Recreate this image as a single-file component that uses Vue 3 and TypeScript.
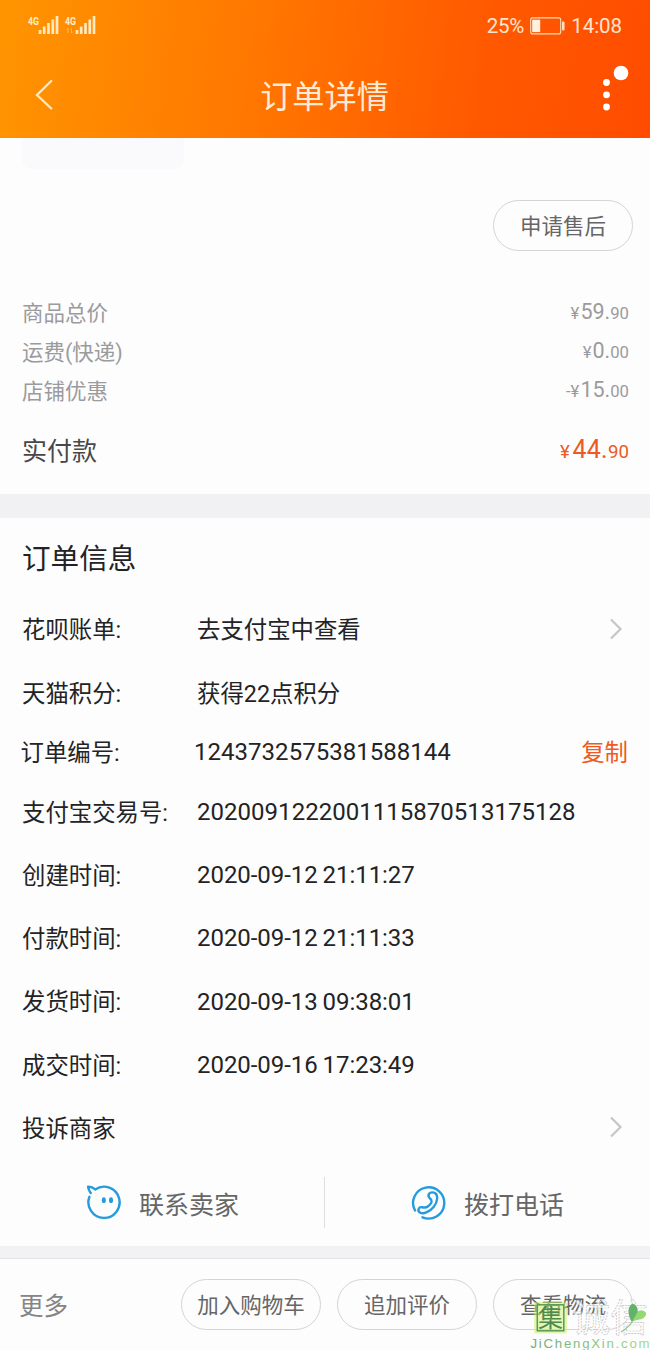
<script setup lang="ts">
interface Price { label: string; sign: string; whole: string; cents: string }
interface Info { label: string; value: string; kind?: 'link' | 'copy'; size: string; numeric?: 'digits' | 'date' }

const prices: Price[] = [
  { label: '商品总价', sign: '¥', whole: '59.', cents: '90' },
  { label: '运费(快递)', sign: '¥', whole: '0.', cents: '00' },
  { label: '店铺优惠', sign: '-¥', whole: '15.', cents: '00' },
]

const infos: Info[] = [
  { label: '花呗账单:', value: '去支付宝中查看', kind: 'link', size: 'tall' },
  { label: '天猫积分:', value: '获得22点积分', size: 'tall' },
  { label: '订单编号:', value: '1243732575381588144', kind: 'copy', size: 'short', numeric: 'digits' },
  { label: '支付宝交易号:', value: '2020091222001115870513175128', size: 'tall', numeric: 'digits' },
  { label: '创建时间:', value: '2020-09-12 21:11:27', size: 'tall', numeric: 'date' },
  { label: '付款时间:', value: '2020-09-12 21:11:33', size: 'tall', numeric: 'date' },
  { label: '发货时间:', value: '2020-09-13 09:38:01', size: 'tall', numeric: 'date' },
  { label: '成交时间:', value: '2020-09-16 17:23:49', size: 'tall', numeric: 'date' },
  { label: '投诉商家', value: '', kind: 'link', size: 'tall' },
]

const actions: string[] = ['加入购物车', '追加评价', '查看物流']
</script>

<template>
  <div class="screen">
    <header class="top">
      <div class="status">
        <div class="signals">
          <svg v-for="n in 2" :key="n" class="signal" width="37" height="22" viewBox="0 0 37 22">
            <text class="net" x="0" y="9.5" textLength="11" lengthAdjust="spacingAndGlyphs">4G</text>
            <path class="bars" d="M12 19v-4M16.2 19v-7.5M20.5 19v-11M24.8 19v-14.5M29 19v-18" />
            <path v-if="n === 2" class="data" d="M3 18v-5l-1.5 1.5M6.5 13v5l1.5-1.5" />
          </svg>
        </div>
        <div class="power">
          <span class="charge">25%</span>
          <svg class="battery" width="35" height="18" viewBox="0 0 35 18">
            <rect x="0.7" y="0.9" width="30" height="16" rx="2" fill="none" stroke="#ffdcb8" stroke-width="1.1" />
            <rect x="2.2" y="2.7" width="8" height="12.4" fill="#fff1e2" />
            <rect x="32" y="4.5" width="2.5" height="9" rx="1" fill="#ffe3c6" />
          </svg>
          <span class="clock">14:08</span>
        </div>
      </div>
      <div class="nav">
        <svg class="back" width="20" height="32" viewBox="0 0 20 32">
          <path d="M17.3 2L3 16L17.3 29.5" />
        </svg>
        <h1>订单详情</h1>
        <svg class="more-dots" width="30" height="48" viewBox="0 0 30 48">
          <circle cx="6.5" cy="17.5" r="3.4" />
          <circle cx="6.5" cy="29.8" r="3.4" />
          <circle cx="6.5" cy="42" r="3.4" />
          <circle cx="21" cy="8" r="7.3" />
        </svg>
      </div>
    </header>

    <section class="summary">
      <div class="thumb"></div>
      <div class="service"><button class="pill">申请售后</button></div>
      <div class="prices">
        <div v-for="p in prices" :key="p.label" class="price">
          <span class="price-label">{{ p.label }}</span>
          <span class="amount"><small class="sign">{{ p.sign }}</small>{{ p.whole }}<small>{{ p.cents }}</small></span>
        </div>
      </div>
      <div class="total">
        <span class="total-label">实付款</span>
        <span class="amount paid"><small class="sign">¥</small>44.<small>90</small></span>
      </div>
    </section>

    <section class="details">
      <h2>订单信息</h2>
      <div v-for="i in infos" :key="i.label" class="row" :class="[i.size, i.kind]">
        <span class="label">{{ i.label }}</span>
        <span class="value" :class="i.numeric">{{ i.value }}</span>
        <svg v-if="i.kind === 'link'" class="chevron" width="14" height="22" viewBox="0 0 14 22">
          <path d="M2 1.5L11.5 11L2 20.5" />
        </svg>
        <a v-if="i.kind === 'copy'" class="copy-link">复制</a>
      </div>
    </section>

    <section class="contact">
      <div class="contact-item">
        <svg width="36" height="36" viewBox="0 0 36 36">
          <path d="M3.4 12.8A15.6 15.6 0 1 0 9.2 5.4Q6 2.6 2.1 2.8Q2.5 6 4.7 9" />
          <ellipse class="eye" cx="17.8" cy="16.2" rx="2" ry="2.9" />
          <ellipse class="eye" cx="25" cy="16.2" rx="2" ry="2.9" />
        </svg>
        <span>联系卖家</span>
      </div>
      <div class="contact-item">
        <svg width="36" height="36" viewBox="0 0 36 36">
          <path d="M4 26.500A15.6 15.6 0 1 1 11.5 33.3" />
          <path d="M18.8 14.2C15.8 11 18.500 7.500 23 8.600C28 10.300 26.500 18.500 22.600 23C18.500 28.200 12 30.500 8.900 28.500C6 26.500 7.800 22.600 11 23.200C13.500 23.700 15 24 16.800 22.500C19 20.700 21 18.500 20.500 16.800C20.200 15.500 19.500 15 18.800 14.200Z" />
        </svg>
        <span>拨打电话</span>
      </div>
    </section>

    <footer class="bar">
      <span class="more">更多</span>
      <button v-for="a in actions" :key="a" class="pill">{{ a }}</button>
    </footer>

    <svg class="mark" width="121" height="56" viewBox="0 0 121 56">
      <defs>
        <linearGradient id="siteTone" x1="0" x2="1">
          <stop offset="0" stop-color="#6dab78" />
          <stop offset="1" stop-color="#a3d98f" />
        </linearGradient>
      </defs>
      <rect x="5" y="8" width="33" height="31.5" rx="1.5" fill="#c9f06a" fill-opacity=".5" />
      <rect x="8.3" y="10.8" width="26.5" height="26" fill="none" stroke="#5c9a57" stroke-width="1.5" />
      <text class="seal" x="9" y="33.3">集</text>
      <text class="name" x="43" y="37">诚信</text>
      <path d="M103 10C107 10 109 14 108.500 18C112 15 118 17 117 21C115 26 108 25 103 28C99 22 98 13 103 10Z" fill="#93d873" />
      <path d="M103 10C107 10 109 14 108.500 18L103 28C99 22 98 13 103 10Z" fill="#62b26c" />
      <path d="M103 28Q99 34 92 38" fill="none" stroke="#8fc67b" stroke-width="1.3" />
      <text class="site" x="1.5" y="53.5" textLength="119">JiChengXin.com</text>
    </svg>
  </div>
</template>

<style>
body { margin: 0; }
</style>

<style scoped>
.screen {
  position: relative;
  width: 650px;
  height: 1350px;
  overflow: hidden;
  background: #fdfdfd;
  font-family: Roboto, "Noto Sans CJK SC", sans-serif;
  color: #232325;
}
.top {
  height: 138px;
  background: linear-gradient(98deg, #ff9500 0%, #ff7800 38%, #ff5900 74%, #ff4c00 100%);
}
.status {
  display: flex;
  justify-content: space-between;
  height: 52px;
  padding: 0 28px;
}
.signals { display: flex; padding-top: 15px; }
.signal { overflow: visible; }
.net { font: 700 10.5px Roboto, sans-serif; fill: #ffedc8; }
.bars { stroke: #ffe9bd; stroke-width: 2.7; }
.data { fill: none; stroke: #ffb657; stroke-width: 1; }
.power {
  display: flex;
  align-items: center;
  color: #ffe5ce;
  font-size: 20.5px;
}
.charge { letter-spacing: -.2px; }
.battery { margin: 0 6px 0 6px; }
.clock { letter-spacing: -.05px; }
.nav {
  display: flex;
  align-items: center;
  justify-content: space-between;
  height: 86px;
  padding: 0 20px 0 34px;
}
.back path { fill: none; stroke: #ffe9c0; stroke-width: 2.3; stroke-linecap: round; }
h1 {
  margin: 4px 0 0 -5px;
  font-size: 32.2px;
  font-weight: 400;
  line-height: 44px;
  color: #ffecd8;
}
.more-dots { align-self: flex-start; margin-top: 13px; fill: #fff; }
.summary { height: 355.5px; border-bottom: 24px solid #f1f0f2; }
.thumb {
  width: 162px;
  height: 31px;
  margin-left: 22px;
  border-radius: 0 0 10px 10px;
  background: #faf9fc;
}
.service { display: flex; justify-content: flex-end; padding: 31px 17px 0 0; }
.pill {
  box-sizing: border-box;
  width: 140px;
  height: 51px;
  padding: 2px 0 0;
  border: 1.3px solid #d4d4d6;
  border-radius: 26px;
  background: transparent;
  font: 21.5px/48px Roboto, "Noto Sans CJK SC", sans-serif;
  color: #666;
  text-align: center;
}
.prices { padding: 42.5px 21px 0 22px; color: #9b9b9e; }
.price {
  display: flex;
  justify-content: space-between;
  height: 39px;
  line-height: 39px;
  font-size: 21.5px;
}
.amount small { font-size: 16.7px; letter-spacing: 0; }
.amount .sign { margin-right: 1px; }
.price .amount { line-height: 35px; }
.total {
  display: flex;
  justify-content: space-between;
  margin-top: 20px;
  padding: 0 21px 0 22px;
  line-height: 40px;
  font-size: 25px;
  color: #48484a;
}
.total-label { line-height: 41px; }
.paid { color: #ed5a22; line-height: 37px; letter-spacing: .3px; }
.paid small { font-size: 18.7px; }
.paid .sign { margin-right: 2.5px; }
.details { height: 641px; }
h2 {
  margin: 0;
  padding: 21px 22px 18.3px;
  font-size: 28.6px;
  font-weight: 400;
  line-height: 40px;
}
.row {
  display: flex;
  align-items: center;
  padding: 0 27px 0 22px;
  font-size: 23.4px;
  white-space: nowrap;
}
.tall { height: 63.2px; }
.short { height: 56px; }
.label { width: 175px; flex: none; }
.value { flex: 1; }
.digits { font-size: 24px; letter-spacing: .03px; padding-top: 2.5px; }
.date { font-size: 24px; letter-spacing: -.05px; word-spacing: -1px; padding-top: 2.5px; }
.copy { padding: 0 22px 0 20.5px; }
.copy .label { width: 173.5px; }
.copy-link { color: #ed5a22; }
.chevron { margin-top: 1px; }
.chevron path { fill: none; stroke: #c6c6c8; stroke-width: 2.2; }
.contact {
  display: flex;
  height: 87.5px;
  border-bottom: 12px solid #f2f1f4;
}
.contact-item {
  display: flex;
  align-items: center;
  box-sizing: border-box;
  width: 326px;
  height: 51px;
  margin-top: 18px;
  padding-left: 86px;
  gap: 17px;
  color: #666;
  font-size: 25px;
}
.contact-item span { padding-top: 2px; }
.contact-item:first-child { border-right: 1px solid #dfdfe1; }
.contact-item svg { fill: none; stroke: #249bdc; stroke-width: 2.4; stroke-linecap: round; stroke-linejoin: round; }
.contact-item .eye { fill: #249bdc; stroke: none; }
.bar {
  display: flex;
  align-items: center;
  box-sizing: border-box;
  height: 91px;
  padding: 0 17px 0 19px;
  gap: 16px;
  border-top: 1px solid #e4e4e6;
}
.more { margin-right: auto; font-size: 24.5px; color: #858587; }
.mark { position: absolute; left: 529px; top: 1294px; overflow: visible; }
.seal { font: 25px "Noto Sans CJK SC", sans-serif; fill: #4d8b4f; }
.name { font: 38px "Noto Sans CJK SC", sans-serif; fill: #fff; fill-opacity: .7; stroke: #bdbdc0; stroke-width: .7; stroke-dasharray: 2 1; }
.site { font: 13.2px "Liberation Sans", Arial, sans-serif; fill: url(#siteTone); }
</style>
